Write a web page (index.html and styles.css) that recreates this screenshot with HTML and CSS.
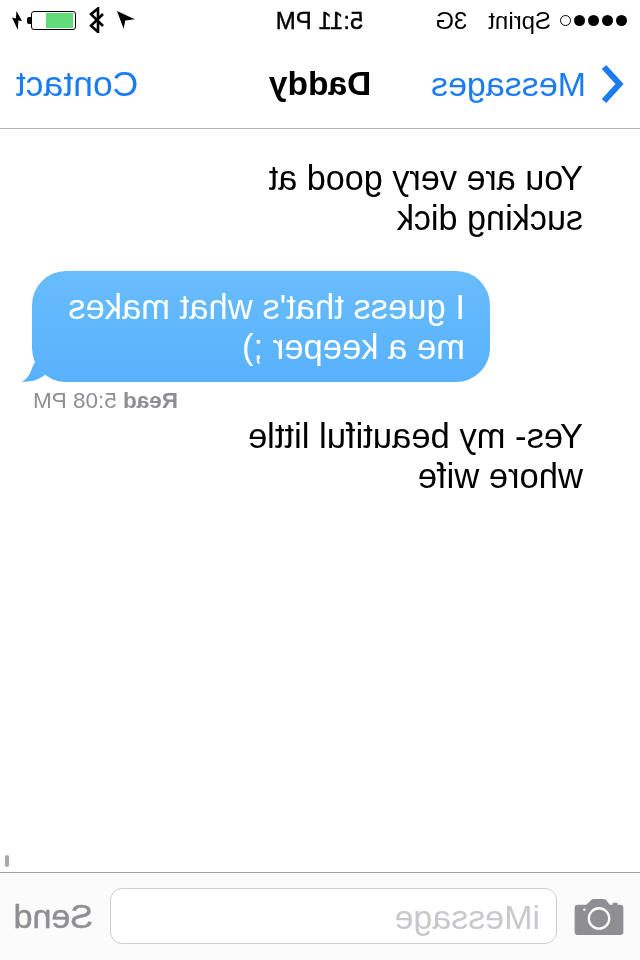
FILE: index.html
```html
<!DOCTYPE html>
<html lang="en">
<head>
<meta charset="utf-8">
<title>Daddy</title>
<link rel="stylesheet" href="styles.css">
</head>
<body>
<div class="screen">
  <header class="status">
    <div class="carrier">
      <span class="dots"><i class="dot"></i><i class="dot"></i><i class="dot"></i><i class="dot"></i><i class="dot off"></i></span>
      <span class="sprint">Sprint</span>
      <span class="net">3G</span>
    </div>
    <div class="time">5:11 PM</div>
    <div class="sys">
      <svg class="loc" width="18" height="18" viewBox="0 0 18 18"><path d="M18 0 L0 8.3 L9.8 9.4 L11.3 18 Z"/></svg>
      <svg class="bt" width="16" height="26" viewBox="0 0 16 26"><path d="M2 7 L14 18.8 L7 25 V1.5 L14 7.2 L2 19" fill="none" stroke="#000" stroke-width="2.6"/></svg>
      <span class="batt"><span class="batt-body"><span class="batt-fill"></span></span><span class="batt-nub"></span></span>
      <svg class="bolt" width="10" height="19" viewBox="0 0 10 19"><path d="M5.5 0 L0 10 L3.6 9.4 L4.2 19 L10 6.5 L6.2 7.5 Z"/></svg>
    </div>
  </header>
  <nav class="nav">
    <div class="back">
      <svg class="chev" width="24" height="40" viewBox="0 0 24 40"><path d="M20 3 L4.5 20 L20 37" fill="none" stroke="#1a7cf0" stroke-width="6"/></svg>
      <span>Messages</span>
    </div>
    <div class="title">Daddy</div>
    <div class="contact">Contact</div>
  </nav>
  <main class="thread">
    <p class="msg first">You are very good at<br>sucking dick</p>
    <div class="bubble">I guess that's what makes<br>me a keeper ;)
      <svg class="tail" width="30" height="20" viewBox="0 0 30 20"><path d="M17 0 L20 6 Q22 15 30 19.7 Q20 20 14 17 Q10 15 7 13 Z" fill="#58b1fc"/></svg>
    </div>
    <div class="read"><b>Read</b> 5:08 PM</div>
    <p class="msg">Yes- my beautiful little<br>whore wife</p>
  </main>
  <footer class="bar">
    <svg class="cam" width="50" height="37" viewBox="0 0 50 38">
      <path d="M3 7 H14 L18 1.5 Q19 1 21 1 H30 Q32 1 33 2 L38 7 H47 Q50 7 50 10 V35 Q50 38 47 38 H3 Q0 38 0 35 V10 Q0 7 3 7 Z M6 5 H11 V7 H6 Z" fill="#8e8e93"/>
      <circle cx="25" cy="21" r="10.5" fill="none" stroke="#fff" stroke-width="2.4"/>
      <circle cx="40" cy="12" r="1.2" fill="#fff"/>
    </svg>
    <div class="input">iMessage</div>
    <div class="send">Send</div>
  </footer>
  <div class="scroll"></div>
</div>
</body>
</html>
```
FILE: styles.css
```css
* { box-sizing: border-box; }
html, body { margin: 0; padding: 0; background: #fff; }
.screen {
  position: relative;
  width: 640px;
  height: 960px;
  overflow: hidden;
  display: flex;
  flex-direction: column;
  transform: scaleX(-1);
  font-family: "Liberation Sans", Arial, sans-serif;
  color: #000;
}
.status {
  height: 40px;
  flex: none;
  display: grid;
  grid-template-columns: 1fr auto 1fr;
  align-items: center;
  font-size: 24px;
  padding: 1px 12px 0 13px;
}
.carrier { display: flex; align-items: center; }
.dots { display: flex; gap: 3px; }
.dot { width: 11px; height: 11px; border-radius: 50%; background: #000; }
.dot.off { background: #fff; border: 1px solid #000; }
.sprint { margin-left: 9px; }
.net { margin-left: 21px; }
.time { font-weight: 400; -webkit-text-stroke: 0.4px #000; }
.sys { display: flex; align-items: center; justify-content: flex-end; margin-top: -1px; }
.loc { margin-right: 12px; }
.bt { margin-right: 13px; }
.batt { display: flex; align-items: center; margin-right: 5px; }
.batt-body { width: 45px; height: 19px; border: 1px solid #000; border-radius: 3px; padding: 1px 2px; display: block; }
.batt-fill { display: block; width: 27px; height: 15px; background: #62dc78; }
.batt-nub { width: 4px; height: 7px; background: #000; border-radius: 0 2px 2px 0; }
.nav {
  height: 89px;
  flex: none;
  display: grid;
  grid-template-columns: 1fr auto 1fr;
  align-items: center;
  border-bottom: 1px solid #b2b2b2;
  padding: 0 16px 0 16px;
  font-size: 34px;
  color: #1a7cf0;
}
.back { display: flex; align-items: center; gap: 14px; }
.title { color: #000; font-weight: 700; font-size: 33.5px; }
.contact { text-align: right; font-size: 35.5px; }
.thread { flex: 1; display: flex; flex-direction: column; align-items: flex-start; padding-top: 29px; }
.msg { margin: 0 0 0 57px; font-size: 34.6px; line-height: 40px; }
.first { margin-bottom: 33px; font-size: 34.2px; }
.bubble {
  position: relative;
  margin-left: 150px;
  width: 458px;
  height: 111px;
  padding: 16px 0 0 25px;
  border-radius: 34px;
  background: linear-gradient(#68bdfb, #58b1fc);
  color: #fff;
  font-size: 34.6px;
  line-height: 40px;
  white-space: nowrap;
}
.tail { position: absolute; right: -10px; bottom: 0; }
.read { margin: 7px 0 0 462px; font-size: 22.5px; line-height: 24px; color: #8e8e93; white-space: nowrap; }
.read + .msg { margin-top: 3px; }
.bar {
  height: 88px;
  flex: none;
  display: flex;
  align-items: center;
  padding: 0 14px 1px 16px;
  background: #fbfbfb;
  border-top: 1px solid #a0a0a0;
}
.cam { margin-right: 17px; flex: none; }
.input {
  flex: none;
  width: 447px;
  height: 56px;
  border: 1px solid #cfcfcf;
  border-radius: 12px;
  background: #fff;
  color: #c8c8cc;
  font-size: 34px;
  line-height: 56px;
  padding-left: 16px;
}
.send { margin-left: 17px; color: #8e8e93; font-size: 34px; -webkit-text-stroke: 0.5px #8e8e93; }
.scroll { position: absolute; right: 5px; top: 855px; width: 4px; height: 12px; border-radius: 2px; background: #a9a9a9; }
```
